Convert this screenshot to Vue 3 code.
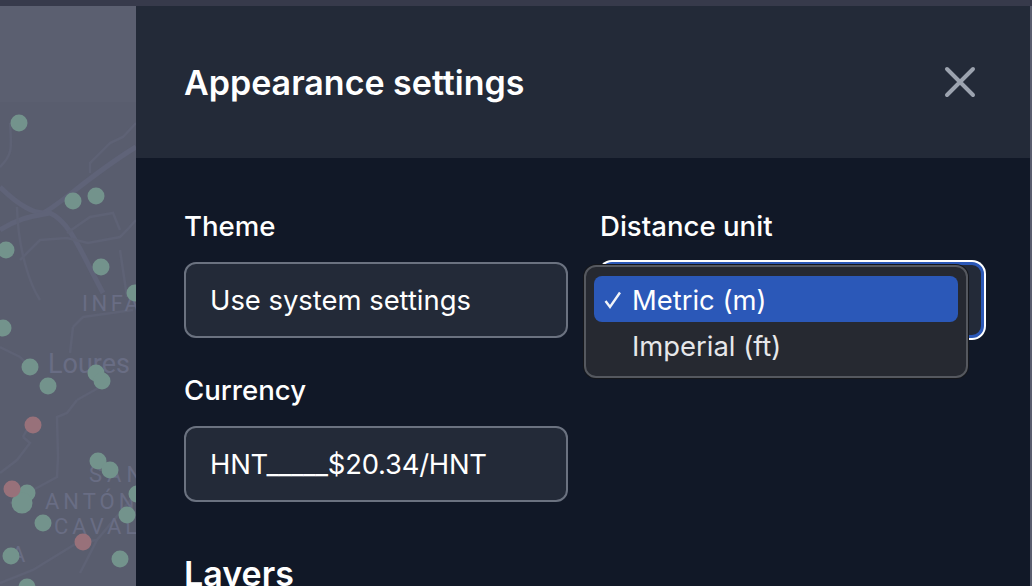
<script setup>
const dots = [
  [19,123,8.5],[73,201,8.5],[96,196,8.5],[6,250,8.5],[101,267,8.5],[135,293,8.5],
  [3,328,8.5],[30,367,8.5],[48,386,8.5],[96,373,8.5],[102,381,8.5],[98,461,8.5],[110,470,8.5],
  [27,493,8.5],[22,503,10.5],[43,523,8.5],[127,515,8.5],[137,494,8.5],[11,556,8.5],[120,559,8.5],[27,587,8.5]
]
const reds = [[33,425],[12,489],[83,542]]
const thick = [
  'M0 187C20 207 35 213 43 213C60 205 90 175 136 147',
  'M0 230C20 217 35 216 50 213C70 222 80 250 103 293',
]
const thin = [
  'M10 123C12 150 12 155 0 167',
  'M17 207C18 250 30 285 40 300',
  'M20 260L40 240L67 238L88 243L120 237L127 230L136 220',
  'M90 173V163L110 143L123 137L136 123',
  'M67 233L90 217L113 213L120 230',
  'M127 297L120 250',
  'M73 327L83 317L133 310',
  'M73 327L70 353',
  'M0 347L20 357L33 370',
  'M77 400L67 413L57 417L58 457L57 477L33 490L10 503',
  'M23 437L30 443L17 460L0 473',
  'M23 437L33 418',
  'M77 400L100 387',
  'M0 583L33 570L77 543L97 540',
  'M133 497L97 540L80 573',
]
</script>

<template>
  <div class="page">
    <div class="topbar"></div>
    <div class="main">
      <div class="map">
        <svg width="136" height="580" viewBox="0 6 136 580">
          <rect x="0" y="6" width="136" height="96" fill="#5b5f70" />
          <rect x="0" y="102" width="136" height="484" fill="#595d6e" />
          <path v-for="(d, i) in thick" :key="'t' + i" :d="d" fill="none" stroke="#5f6378" stroke-width="5" />
          <path v-for="(d, i) in thin" :key="'n' + i" :d="d" fill="none" stroke="#5e6275" stroke-width="2.5" />
          <g class="maplabel">
            <text x="82" y="311" font-size="22" letter-spacing="3.5">INFA</text>
            <text x="48" y="373" font-size="27">Loures</text>
            <text x="89" y="482" font-size="22" letter-spacing="5">SAN</text>
            <text x="45" y="509" font-size="22" letter-spacing="4">ANTÓNI</text>
            <text x="54" y="534" font-size="22" letter-spacing="4">CAVAL</text>
            <text x="11" y="562" font-size="22">A</text>
          </g>
          <circle v-for="(d, i) in dots" :key="'g' + i" :cx="d[0]" :cy="d[1]" :r="d[2]" fill="#73938c" />
          <circle v-for="(d, i) in reds" :key="'r' + i" :cx="d[0]" :cy="d[1]" r="8.5" fill="#98717a" />
        </svg>
      </div>
      <div class="panel">
        <header class="head">
          <h2>Appearance settings</h2>
          <svg class="close" width="32" height="32" viewBox="0 0 32 32">
            <path d="M3 3L29 29M29 3L3 29" stroke="#9ca3af" stroke-width="4" stroke-linecap="round" />
          </svg>
        </header>
        <div class="body">
          <div class="grid">
            <div class="field">
              <label>Theme</label>
              <div class="input">Use system settings</div>
            </div>
            <div class="field">
              <label>Distance unit</label>
              <div class="input focused"></div>
              <div class="menu">
                <div class="opt active">
                  <svg class="check" width="20" height="20" viewBox="0 0 20 20">
                    <path d="M2.5 11L7 17L17 2.5" fill="none" stroke="#f1f3f8" stroke-width="2.4" />
                  </svg>
                  Metric (m)
                </div>
                <div class="opt">Imperial (ft)</div>
              </div>
            </div>
            <div class="field">
              <label>Currency</label>
              <div class="input tight">HNT_____$20.34/HNT</div>
            </div>
          </div>
          <h3>Layers</h3>
        </div>
        <div class="scroll"></div>
      </div>
    </div>
  </div>
</template>

<style>
html, body { margin: 0; background: #111827; overflow: hidden; }
</style>

<style scoped>
.page {
  width: 1032px;
  height: 586px;
  overflow: hidden;
  display: flex;
  flex-direction: column;
  font-family: Inter, "Liberation Sans", sans-serif;
  color: #fff;
}
.topbar { height: 6px; flex: none; background: #373a4b; }
.main { flex: 1; display: flex; min-height: 0; }
.map { width: 136px; flex: none; overflow: hidden; }
.map svg { display: block; }
.maplabel { font-family: Roboto, sans-serif; fill: #696d84; }
.panel { flex: 1; position: relative; background: #111827; overflow: hidden; }
.head {
  height: 152px;
  box-sizing: border-box;
  padding: 0 56px 0 48px;
  display: flex;
  align-items: center;
  justify-content: space-between;
  background: #232a38;
}
.head h2 { margin: 0; padding-top: 2px; font-size: 34px; line-height: 42px; font-weight: 560; }
.close { display: block; }
.body { padding: 48px 48px 0; }
.grid { display: grid; grid-template-columns: 384px 384px; column-gap: 32px; row-gap: 32px; }
.field { position: relative; }
label { display: block; font-size: 27.6px; line-height: 40px; font-weight: 500; margin-bottom: 16px; }
.input {
  height: 76px;
  box-sizing: border-box;
  border: 2px solid #6b7280;
  border-radius: 12px;
  background: #232a38;
  padding: 0 24px;
  display: flex;
  align-items: center;
  font-size: 27.4px;
  color: #fff;
}
.tight { letter-spacing: -0.22px; }
.focused { border: 3px solid #2b58b8; box-shadow: 0 0 0 2px #fff; }
.menu {
  position: absolute;
  left: -16px;
  top: 59px;
  width: 384px;
  height: 113px;
  box-sizing: border-box;
  padding: 9px 8px;
  background: #262931;
  border: 2px solid #55585f;
  border-radius: 12px;
  box-shadow: 0 0 0 1px #15171c;
  font-size: 27.4px;
  color: #e6e7ea;
}
.opt {
  position: relative;
  height: 46px;
  box-sizing: border-box;
  padding: 2px 0 0 38px;
  display: flex;
  align-items: center;
  border-radius: 8px;
}
.active { background: #2b58b8; color: #fff; }
.check { position: absolute; left: 9px; top: 14px; }
h3 { margin: 50px 0 0; font-size: 34px; line-height: 44px; font-weight: 600; }
.scroll { position: absolute; right: 0; top: 0; bottom: 0; width: 2px; background: #5a5e6f; }
</style>
